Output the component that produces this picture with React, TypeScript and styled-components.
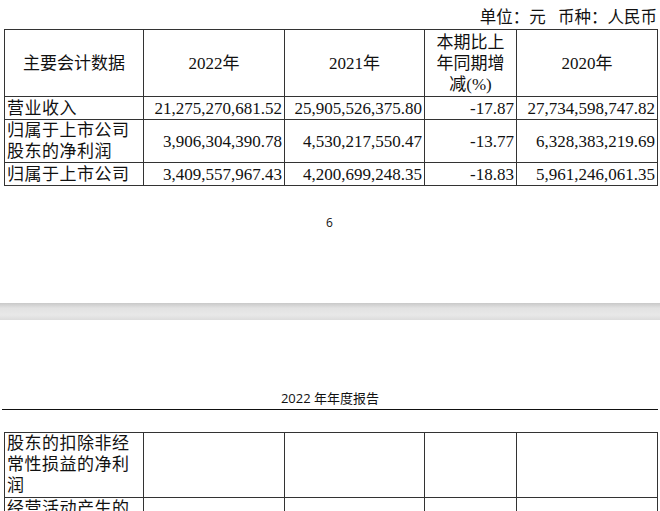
import React from "react";
import styled, { createGlobalStyle } from "styled-components";

const Global = createGlobalStyle`
  html, body { margin: 0; padding: 0; background: #fff; }
  body { width: 660px; height: 511px; overflow: hidden; font-family: "Liberation Serif", "Noto Sans CJK SC", serif; color: #111; }
`;

const Page = styled.div`
  display: flex;
  flex-direction: column;
  padding: 0 3px 0 4px;
`;

const Unit = styled.div`
  height: 29px;
  display: flex;
  align-items: center;
  justify-content: flex-end;
  font-size: 16.5px;
  padding-top: 3px;
  box-sizing: border-box;
  padding-right: 0;
  white-space: pre;
`;

const Table = styled.table`
  border-collapse: collapse;
  width: 653px;
  table-layout: fixed;
  font-size: 17px;
  & td { border: 1.5px solid #333; padding: 0 2px; line-height: 21px; white-space: nowrap; overflow: hidden; }
`;

const Head = styled.td`
  text-align: center;
`;

const Label = styled.td`
  text-align: left;
  letter-spacing: 0.5px;
`;

const Num = styled.td`
  text-align: right;
`;

const PageNo = styled.div`
  text-align: center;
  font-family: "Open Sans", "Liberation Sans", sans-serif;
  font-size: 12px;
  margin-top: 28px;
  margin-left: -2px;
`;

const Gap = styled.div`
  height: 17px;
  margin: 72px -3px 0 -4px;
  background: linear-gradient(#c9c9c9 0%, #e2e2e2 30%, #e8e8e8 70%, #dcdcdc 100%);
`;

const Header = styled.div`
  margin: 68px -1px 0 -2px;
  text-align: center;
  font-family: "Open Sans", "Noto Sans CJK SC", sans-serif;
  font-size: 13px;
  padding-bottom: 2px;
  border-bottom: 1.5px solid #111;
`;

const Table2 = styled(Table)`
  margin-top: 22px;
  & td { vertical-align: top; }
`;

const rows = [
  ["营业收入", "21,275,270,681.52", "25,905,526,375.80", "-17.87", "27,734,598,747.82"],
  ["归属于上市公司股东的净利润", "3,906,304,390.78", "4,530,217,550.47", "-13.77", "6,328,383,219.69"],
  ["归属于上市公司", "3,409,557,967.43", "4,200,699,248.35", "-18.83", "5,961,246,061.35"],
];

const Cols = () => (
  <colgroup>
    <col style={{ width: 139 }} />
    <col style={{ width: 141 }} />
    <col style={{ width: 140 }} />
    <col style={{ width: 92 }} />
    <col style={{ width: 141 }} />
  </colgroup>
);

export default function App() {
  return (
    <>
      <Global />
      <Page>
        <Unit>{"单位：元   币种：人民币"}</Unit>
        <Table>
          <Cols />
          <tbody>
            <tr style={{ height: 67 }}>
              <Head>主要会计数据</Head>
              <Head>2022年</Head>
              <Head>2021年</Head>
              <Head>本期比上<br />年同期增<br />减(%)</Head>
              <Head>2020年</Head>
            </tr>
            {rows.map((r, i) => (
              <tr key={i} style={{ height: i === 1 ? 43 : 23 }}>
                <Label>{i === 1 ? <>归属于上市公司<br />股东的净利润</> : r[0]}</Label>
                <Num>{r[1]}</Num>
                <Num>{r[2]}</Num>
                <Num>{r[3]}</Num>
                <Num>{r[4]}</Num>
              </tr>
            ))}
          </tbody>
        </Table>
        <PageNo>6</PageNo>
        <Gap />
        <Header>2022 年年度报告</Header>
        <Table2>
          <Cols />
          <tbody>
            <tr style={{ height: 65 }}>
              <Label>股东的扣除非经<br />常性损益的净利<br />润</Label>
              <Num /><Num /><Num /><Num />
            </tr>
            <tr style={{ height: 30 }}>
              <Label>经营活动产生的</Label>
              <Num /><Num /><Num /><Num />
            </tr>
          </tbody>
        </Table2>
      </Page>
    </>
  );
}
